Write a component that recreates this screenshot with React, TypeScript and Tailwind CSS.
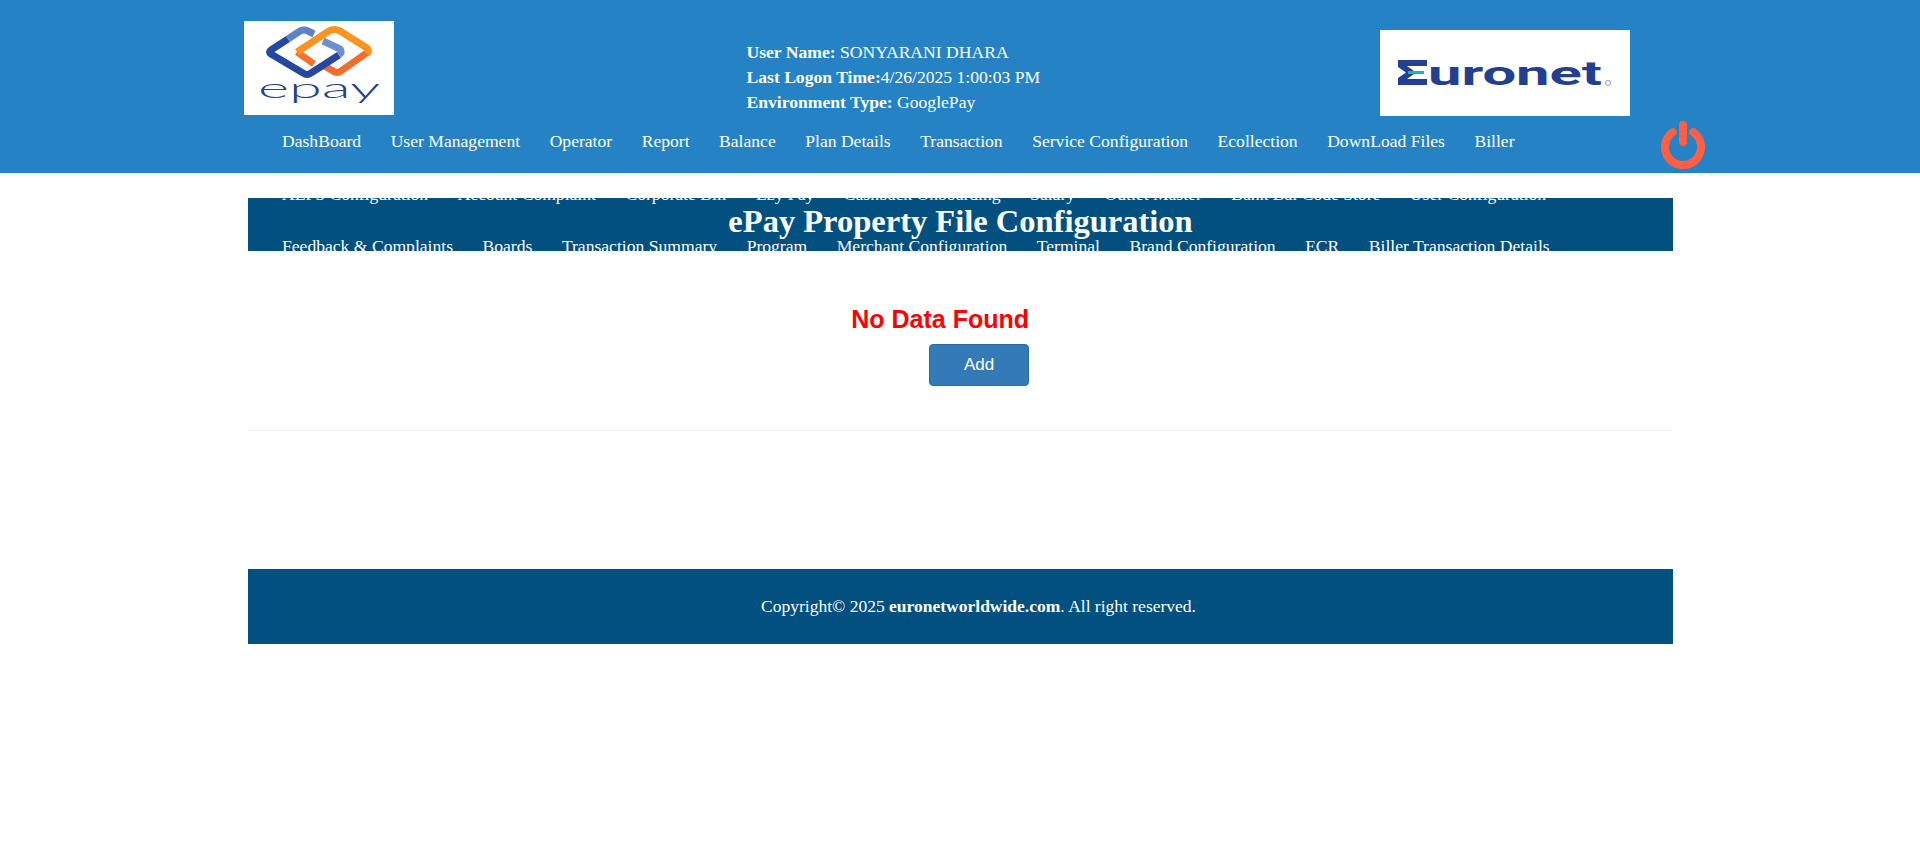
const MENU = [
  "DashBoard", "User Management", "Operator", "Report", "Balance", "Plan Details", "Transaction", "Service Configuration", "Ecollection", "DownLoad Files", "Biller",
  "AEPS Configuration", "Account Complaint", "Corporate Bill", "Ezy Pay", "Cashback Onboarding", "Salary", "Outlet Master", "Bank Bal Code Store", "User Configuration",
  "Feedback & Complaints", "Boards", "Transaction Summary", "Program", "Merchant Configuration", "Terminal", "Brand Configuration", "ECR", "Biller Transaction Details",
];

function EpayLogo() {
  return (
    <svg width="150" height="94" viewBox="0 0 150 94" className="block">
      <rect width="150" height="94" fill="#ffffff" />
      <g fill="none" strokeWidth="7" strokeLinecap="butt" strokeLinejoin="round">
        <path d="M124 31 L97 50 Q93 53 89 50 L79 44" stroke="#f26d2b" />
        <path d="M53 31 L70 43" stroke="#f4722e" />
        <path d="M44 18 L27 29 Q24 31 27 33 L59 52 Q63 55 67 52 L95 34" stroke="#24479f" />
        <path d="M44 18 L56 10 Q60 8 64 10 L70 13" stroke="#5d83c4" />
        <path d="M79 20 L96 28 Q99 31 95 34" stroke="#6c8fd0" />
        <path d="M53 31 L85 10 Q90 7 96 10 L123 27 Q126 30 123 33" stroke="#f8941f" />
      </g>
      <text x="14" y="77" textLength="122" lengthAdjust="spacingAndGlyphs" fontFamily="Lato, sans-serif" fontWeight="300" fontSize="27" fill="#24408e">epay</text>
    </svg>
  );
}

function EuronetLogo() {
  return (
    <svg width="250" height="86" viewBox="0 0 250 86" className="block">
      <rect width="250" height="86" fill="#ffffff" />
      <path d="M18 30 H47 V36 H27 L36 42.5 L27 49 H47 V55 H18 V48 L26 42.5 L18 37 Z" fill="#233f92" />
      <rect x="28" y="41" width="16" height="3" fill="#1fb5a7" />
      <text x="48" y="55" textLength="174" lengthAdjust="spacingAndGlyphs" fontFamily="Roboto, sans-serif" fontWeight="700" fontSize="33" fill="#233f92">uronet</text>
      <circle cx="228" cy="53" r="2.5" fill="none" stroke="#8c9bc8" strokeWidth="1" />
    </svg>
  );
}

function PowerIcon() {
  return (
    <svg width="44" height="48" viewBox="0 0 44 48" className="block shrink-0" fill="none" stroke="#ff5f45" strokeWidth="8" strokeLinecap="round">
      <path d="M11.7 11.3 A18 18 0 1 0 32.3 11.3" />
      <path d="M22 4 V21" />
    </svg>
  );
}

export default function App() {
  return (
    <div className="min-h-[847px] bg-white text-white font-['Liberation_Serif',serif]">
      <header className="h-[173px] bg-[#2583c5]">
        <div className="ml-[244px] w-[1461px]">
          <div className="flex h-[115px] items-start">
            <div className="mt-[21px] w-[150px]">
              <EpayLogo />
            </div>
            <div className="ml-[352.5px] mt-[40px] w-[633.5px] text-[17.6px] leading-[25px]">
              <div><b>User Name:</b> SONYARANI DHARA</div>
              <div><b>Last Logon Time:</b>4/26/2025 1:00:03 PM</div>
              <div><b>Environment Type:</b> GooglePay</div>
            </div>
            <div className="mt-[30px] w-[250px]">
              <EuronetLogo />
            </div>
          </div>
          <div className="flex items-start">
            <nav className="relative z-10 flex w-[1417px] flex-wrap gap-x-[29.5px] pl-[38px] text-[17.6px] leading-[52.5px]">
              {MENU.map(item => (
                <a key={item} className="h-[52.5px] whitespace-nowrap">{item}</a>
              ))}
            </nav>
            <div className="mt-[6px]">
              <PowerIcon />
            </div>
          </div>
        </div>
      </header>

      <main className="ml-[248px] mt-[25px] w-[1425px]">
        <div className="h-[53px] bg-[#01507f] text-center text-[32.5px] font-bold leading-[46px]">
          ePay Property File Configuration
        </div>

        <div className="h-[180px] border-b border-[#eeeeee] pt-[52px] font-['Liberation_Sans',sans-serif]">
          <div className="flex w-[781px] flex-col items-end">
            <div className="text-[25px] font-bold leading-[32px] text-[#ff0000]">No Data Found</div>
            <button className="mt-[9px] h-[42px] w-[100px] rounded-[4px] border border-[#2e6da4] bg-[#337ab7] text-[17px] text-white">
              Add
            </button>
          </div>
        </div>

        <footer className="mt-[138px] flex h-[75px] items-center justify-center bg-[#01507f] pl-[36px] text-[17.5px]">
          <span>Copyright© 2025 <b>euronetworldwide.com</b>. All right reserved.</span>
        </footer>
      </main>
    </div>
  );
}
